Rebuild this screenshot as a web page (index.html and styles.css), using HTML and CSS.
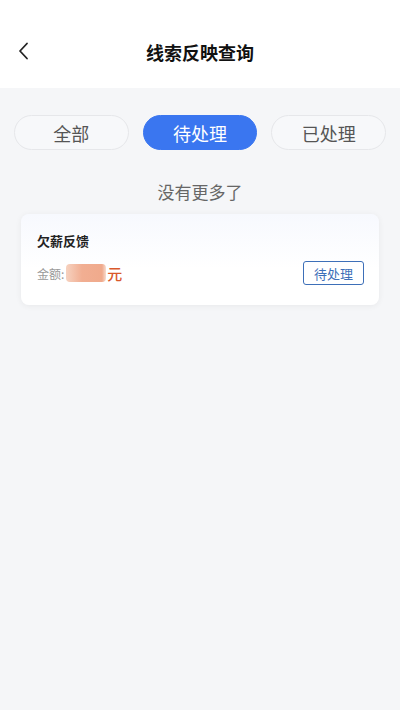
FILE: index.html
```html
<!DOCTYPE html>
<html lang="zh">
<head>
<meta charset="utf-8">
<link rel="stylesheet" href="styles.css">
</head>
<body>
<div class="page">
  <header class="nav">
    <span class="back">
      <svg width="14" height="20" viewBox="0 0 14 20"><path d="M10 2.5 L3 10 L10 17.5" fill="none" stroke="#222" stroke-width="1.8" stroke-linecap="round" stroke-linejoin="round"/></svg>
    </span>
    <h1 class="title">线索反映查询</h1>
  </header>
  <div class="tabs">
    <div class="tab">全部</div>
    <div class="tab active">待处理</div>
    <div class="tab">已处理</div>
  </div>
  <div class="nomore">没有更多了</div>
  <div class="card">
    <div class="card-title">欠薪反馈</div>
    <div class="card-row">
      <div class="amount">
        <span class="label">金额:</span>
        <span class="blur"></span>
        <span class="unit">元</span>
      </div>
      <span class="tag">待处理</span>
    </div>
  </div>
</div>
</body>
</html>
```
FILE: styles.css
```css
html, body { margin: 0; padding: 0; }
body {
  font-family: "Noto Sans CJK SC", "Noto Sans", sans-serif;
  background: #f5f6f8;
  width: 400px;
  height: 710px;
  overflow: hidden;
}
.page { min-height: 710px; background: #f5f6f8; }
.nav {
  height: 88px;
  background: #fff;
  display: flex;
  align-items: center;
  justify-content: center;
  position: relative;
}
.back {
  position: absolute;
  left: 17px;
  top: 41px;
  display: flex;
}
.title {
  margin: 0;
  font-size: 18px;
  font-weight: 700;
  color: #111;
  padding-top: 16px;
}
.tabs {
  display: flex;
  gap: 14px;
  padding: 27px 14px 0 14px;
}
.tab {
  flex: 1;
  height: 35px;
  border: 1px solid #e6e7ea;
  border-radius: 18px;
  box-sizing: border-box;
  display: flex;
  align-items: center;
  justify-content: center;
  font-size: 18px;
  color: #555;
  background: #f7f8fa;
}
.tab.active {
  background: #3a76f0;
  border-color: #3a76f0;
  color: #fff;
}
.nomore {
  text-align: center;
  font-size: 17px;
  color: #666;
  margin-top: 30px;
  line-height: 24px;
}
.card {
  margin: 10px 21px 0 21px;
  height: 91px;
  box-sizing: border-box;
  border-radius: 8px;
  background: linear-gradient(180deg, #f7f9fe 0%, #ffffff 60%);
  box-shadow: 0 1px 6px rgba(0, 0, 0, 0.06);
  padding: 17px 15px 0 16px;
}
.card-title {
  font-size: 13px;
  font-weight: 700;
  color: #222;
  line-height: 20px;
}
.card-row {
  display: flex;
  align-items: center;
  justify-content: space-between;
  margin-top: 10px;
}
.amount { display: flex; align-items: center; }
.label { font-size: 12px; color: #999; }
.blur {
  width: 40px;
  height: 18px;
  border-radius: 4px;
  background: linear-gradient(90deg, #f6d2c0 0%, #f1ae92 40%, #f0aa8c 90%, #f7dccf 100%);
  margin-left: 2px;
}
.unit { font-size: 15px; color: #d9582b; font-weight: 500; margin-left: 1px; }
.tag {
  width: 61px;
  height: 24px;
  box-sizing: border-box;
  border: 1px solid #3d6fb8;
  border-radius: 3px;
  color: #3d6fb8;
  font-size: 13px;
  display: flex;
  align-items: center;
  justify-content: center;
}
```
